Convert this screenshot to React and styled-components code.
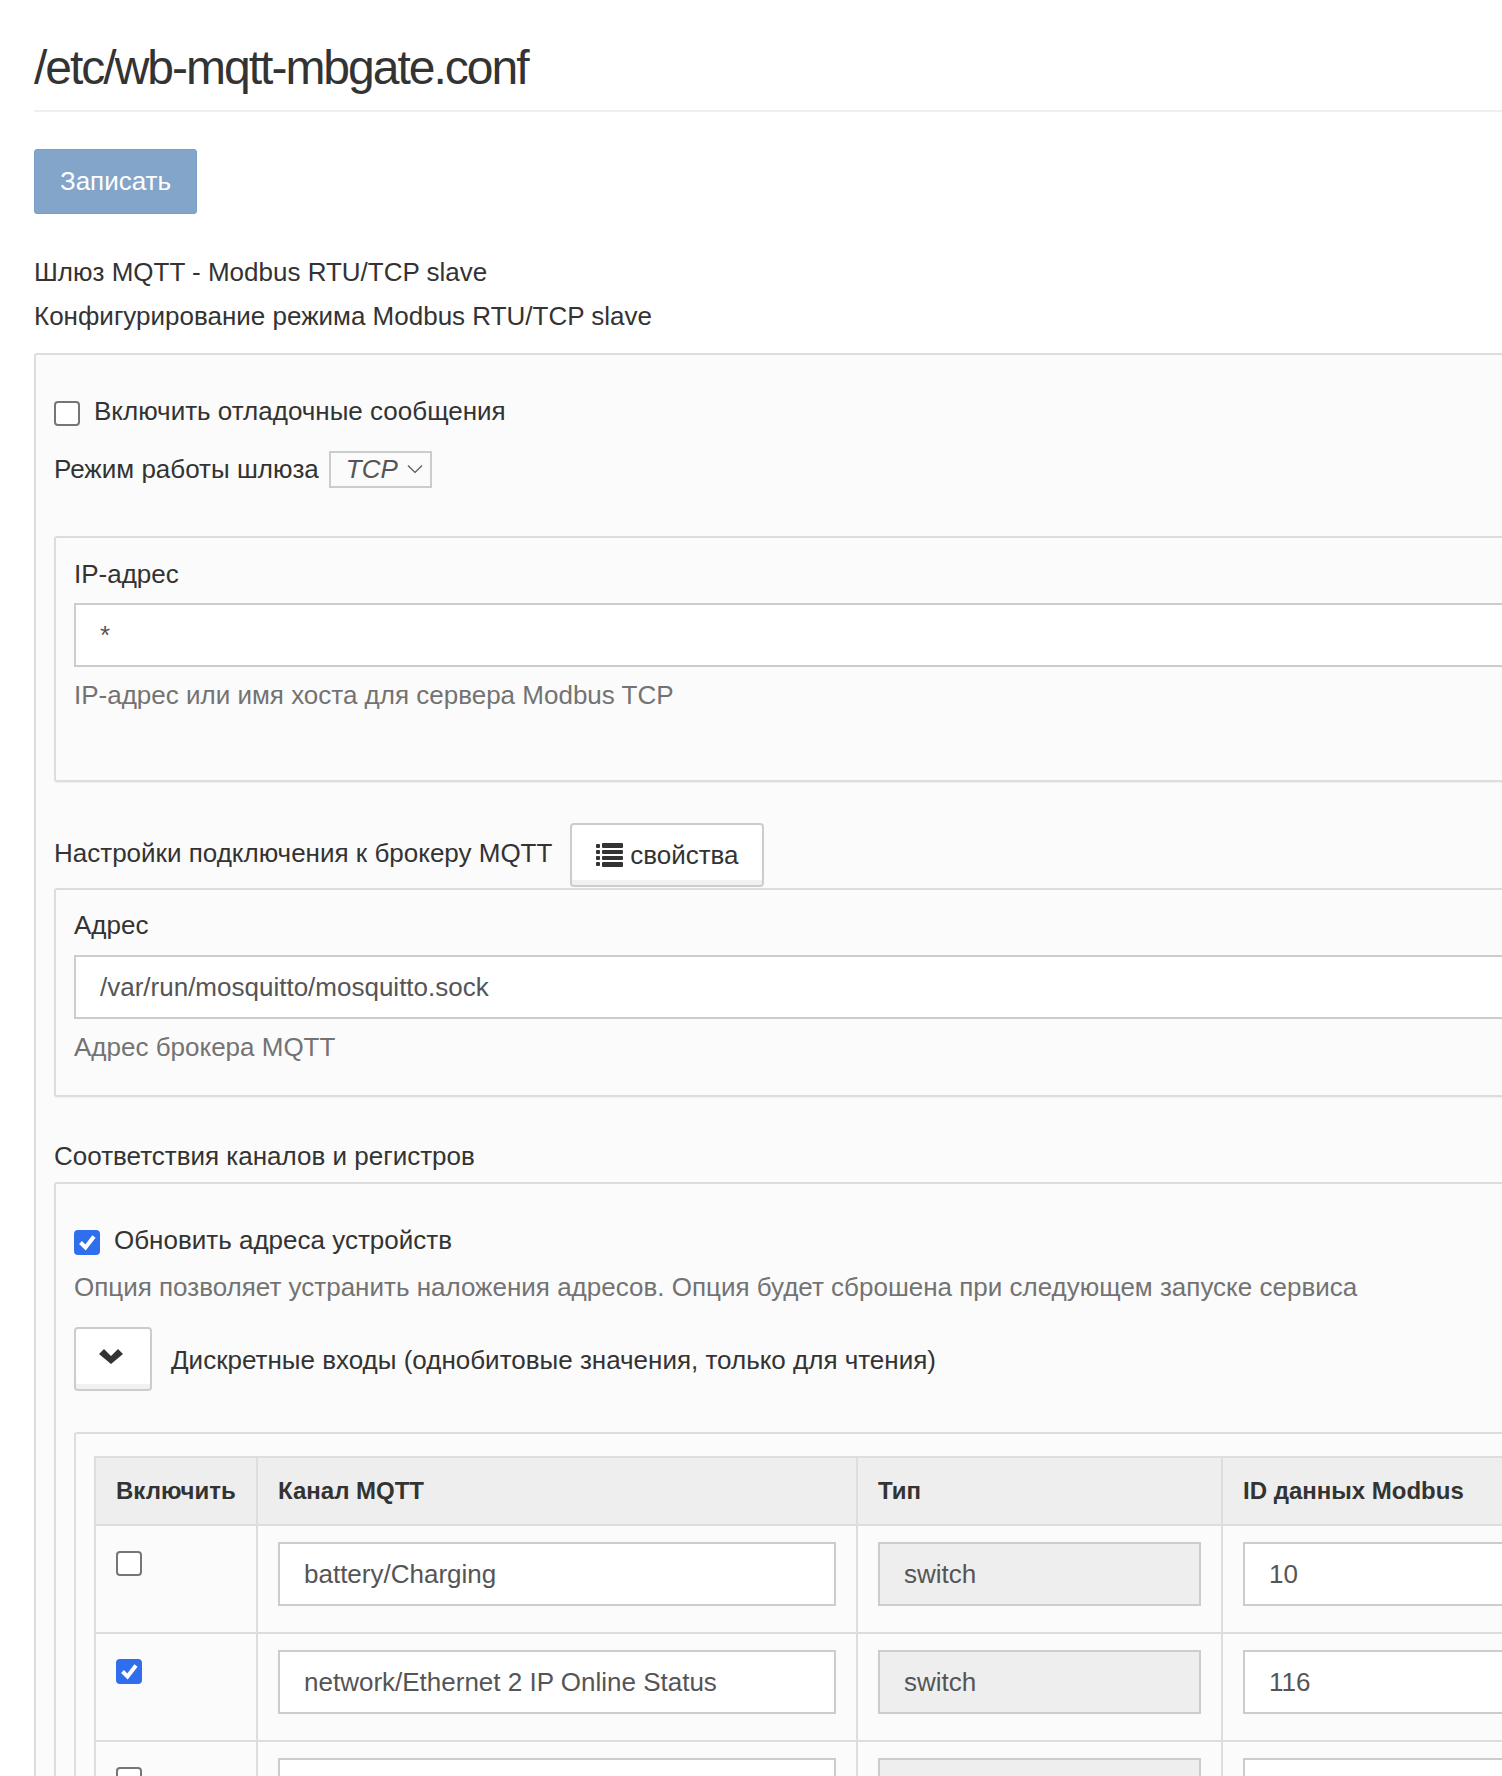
import React from 'react';
import styled, { createGlobalStyle } from 'styled-components';

const GlobalStyle = createGlobalStyle`
  html, body {
    margin: 0;
    padding: 0;
    background: #fff;
  }
`;

const Page = styled.div`
  width: 1502px;
  height: 1776px;
  overflow: hidden;
  box-sizing: border-box;
  padding-left: 34px;
  font-family: "Liberation Sans", Arial, sans-serif;
  font-size: 26px;
  color: #333;
`;

const Content = styled.div`
  width: 1660px;
`;

const Title = styled.h1`
  margin: 0;
  height: 110px;
  border-bottom: 2px solid #eee;
  font-size: 48px;
  font-weight: 400;
  line-height: 136px;
  letter-spacing: -2px;
`;

const SaveButton = styled.button`
  display: block;
  width: 163px;
  height: 65px;
  margin: 37px 0 0;
  padding: 0;
  border: 1px solid #7b9fc6;
  border-radius: 3px;
  background: #83a5c9;
  color: #fff;
  font: inherit;
`;

const Intro = styled.p`
  margin: ${(p) => p.$top}px 0 0;
  line-height: 44px;
`;

const Panel = styled.div`
  box-sizing: border-box;
  margin-top: ${(p) => p.$top || 0}px;
  padding: ${(p) => p.$pad || '0 18px'};
  min-height: ${(p) => p.$height}px;
  border: 2px solid #ddd;
  border-radius: 3px;
  background: #fbfbfb;
  box-shadow: 0 1px 1px rgba(0, 0, 0, 0.05);
`;

const CheckRow = styled.div`
  display: flex;
  align-items: center;
  gap: 14px;
  height: 44px;
`;

const Box = styled.span`
  display: inline-flex;
  flex: none;
  align-items: center;
  justify-content: center;
  box-sizing: border-box;
  width: 26px;
  height: 25px;
  position: relative;
  top: 2px;
  vertical-align: top;
  border: ${(p) => (p.$checked ? 'none' : '2px solid #767676')};
  border-radius: 4px;
  background: ${(p) => (p.$checked ? '#2f6fed' : '#fff')};
`;

const ModeRow = styled.div`
  display: flex;
  align-items: center;
  gap: 10px;
  height: 40px;
  margin-top: 16px;
`;

const ModeSelect = styled.div`
  display: flex;
  align-items: center;
  justify-content: space-between;
  box-sizing: border-box;
  width: 103px;
  height: 37px;
  padding: 0 7px 0 15px;
  border: 2px solid #ccc;
  font-style: italic;
  color: #555;
`;

const FieldLabel = styled.div`
  line-height: 44px;
  padding-top: ${(p) => p.$top || 0}px;
`;

const TextInput = styled.input`
  display: block;
  box-sizing: border-box;
  width: 100%;
  height: 64px;
  margin: ${(p) => p.$top || 0}px 0 0;
  padding: 0 24px;
  border: 2px solid #ccc;
  border-radius: 0;
  outline: none;
  background: ${(p) => (p.disabled ? '#eee' : '#fff')};
  color: #555;
  font: inherit;
  opacity: 1;
`;

const Hint = styled.div`
  margin-top: ${(p) => p.$top || 0}px;
  line-height: 44px;
  color: #737373;
`;

const HeadingRow = styled.div`
  display: flex;
  align-items: center;
  gap: 18px;
  height: 64px;
  margin-top: ${(p) => p.$top || 0}px;
`;

const HeadingLabel = styled.span`
  margin-bottom: 4px;
`;

const GhostButton = styled.button`
  display: inline-flex;
  flex: none;
  align-items: center;
  justify-content: center;
  gap: 7px;
  box-sizing: border-box;
  width: ${(p) => p.$w}px;
  height: ${(p) => p.$h}px;
  padding: ${(p) => p.$pad || 0};
  border: 2px solid #ccc;
  border-radius: 4px;
  background: #fff;
  box-shadow: inset 0 -5px 0 #f1f1f1;
  color: #333;
  font: inherit;
`;

const Section = styled.div`
  margin-top: ${(p) => p.$top}px;
  line-height: 44px;
`;

const ToggleRow = styled.div`
  display: flex;
  align-items: center;
  gap: 19px;
  margin-top: 18px;
`;

const ToggleLabel = styled.span`
  margin-top: 2px;
`;

const TablePanel = styled.div`
  box-sizing: border-box;
  margin-top: 41px;
  padding: 22px 18px 0;
  border: 2px solid #ddd;
  border-radius: 3px;
  background: #fbfbfb;
`;

const Table = styled.table`
  width: 1530px;
  table-layout: fixed;
  border-collapse: collapse;
`;

const Head = styled.th`
  height: 66px;
  padding: 0 20px;
  border: 2px solid #ddd;
  background: #eee;
  text-align: left;
  font-weight: 700;
  font-size: 24px;
`;

const Cell = styled.td`
  box-sizing: border-box;
  padding: ${(p) => (p.$check ? '23px' : '16px')} 20px 26px;
  border: 2px solid #ddd;
  vertical-align: top;
`;

const ListIcon = () => (
  <svg width="27" height="24" viewBox="0 0 27 24" fill="#333">
    <rect x="0" y="1" width="4" height="4" rx="1" />
    <rect x="0" y="7" width="4" height="4" rx="1" />
    <rect x="0" y="13" width="4" height="4" rx="1" />
    <rect x="0" y="19" width="4" height="4" rx="1" />
    <rect x="6" y="0" width="21" height="5" rx="1" />
    <rect x="6" y="7" width="21" height="4" rx="1" />
    <rect x="6" y="13" width="21" height="4" rx="1" />
    <rect x="6" y="19" width="21" height="5" rx="1" />
  </svg>
);

const ChevronIcon = () => (
  <svg width="24" height="16" viewBox="0 0 24 16" fill="#333">
    <path d="M0 6 L5 1 L12 8 L19 1 L24 6 L12 16 Z" />
  </svg>
);

const SmallChevron = () => (
  <svg width="16" height="10" viewBox="0 0 16 10" fill="none" stroke="#555" strokeWidth="1.2">
    <path d="M1 1.5 L8 8.5 L15 1.5" />
  </svg>
);

const CheckMark = () => (
  <svg width="26" height="25" viewBox="0 0 26 25" fill="none" stroke="#fff" strokeWidth="4">
    <path d="M6.5 12.5 L11.5 17.5 L20 6.5" />
  </svg>
);

const Checkbox = ({ checked }) => (
  <Box $checked={checked}>{checked && <CheckMark />}</Box>
);

const rows = [
  { channel: 'battery/Charging', id: '10', on: false },
  { channel: 'network/Ethernet 2 IP Online Status', id: '116', on: true },
  { channel: '', id: '', on: false },
];

const App = () => (
  <Page>
    <GlobalStyle />
    <Content>
      <Title>/etc/wb-mqtt-mbgate.conf</Title>
      <SaveButton>Записать</SaveButton>
      <Intro $top={36}>Шлюз MQTT - Modbus RTU/TCP slave</Intro>
      <Intro $top={0}>Конфигурирование режима Modbus RTU/TCP slave</Intro>

      <Panel $top={15} $pad="34px 18px 0">
        <CheckRow>
          <Checkbox />
          <span>Включить отладочные сообщения</span>
        </CheckRow>
        <ModeRow>
          <span>Режим работы шлюза</span>
          <ModeSelect>TCP <SmallChevron /></ModeSelect>
        </ModeRow>

        <Panel $top={47} $height={246}>
          <FieldLabel $top={14}>IP-адрес</FieldLabel>
          <TextInput $top={7} value="*" readOnly />
          <Hint $top={6}>IP-адрес или имя хоста для сервера Modbus TCP</Hint>
        </Panel>

        <HeadingRow $top={41}>
          <HeadingLabel>Настройки подключения к брокеру MQTT</HeadingLabel>
          <GhostButton $w={194} $h={64}><ListIcon /> свойства</GhostButton>
        </HeadingRow>
        <Panel $top={1} $height={209}>
          <FieldLabel $top={13}>Адрес</FieldLabel>
          <TextInput $top={8} value="/var/run/mosquitto/mosquitto.sock" readOnly />
          <Hint $top={6}>Адрес брокера MQTT</Hint>
        </Panel>

        <Section $top={37}>Соответствия каналов и регистров</Section>
        <Panel $top={4} $pad="34px 18px 40px">
          <CheckRow>
            <Checkbox checked />
            <span>Обновить адреса устройств</span>
          </CheckRow>
          <Hint $top={3}>Опция позволяет устранить наложения адресов. Опция будет сброшена при следующем запуске сервиса</Hint>
          <ToggleRow>
            <GhostButton $w={78} $h={64} $pad="0 4px 7px 0"><ChevronIcon /></GhostButton>
            <ToggleLabel>Дискретные входы (однобитовые значения, только для чтения)</ToggleLabel>
          </ToggleRow>
          <TablePanel>
            <Table>
              <colgroup>
                <col width="162" />
                <col width="600" />
                <col width="365" />
                <col width="403" />
              </colgroup>
              <thead>
                <tr>
                  <Head>Включить</Head>
                  <Head>Канал MQTT</Head>
                  <Head>Тип</Head>
                  <Head>ID данных Modbus</Head>
                </tr>
              </thead>
              <tbody>
                {rows.map((row, i) => (
                  <tr key={i}>
                    <Cell $check><Checkbox checked={row.on} /></Cell>
                    <Cell><TextInput value={row.channel} readOnly /></Cell>
                    <Cell><TextInput value="switch" disabled /></Cell>
                    <Cell><TextInput value={row.id} readOnly /></Cell>
                  </tr>
                ))}
              </tbody>
            </Table>
          </TablePanel>
        </Panel>
      </Panel>
    </Content>
  </Page>
);

export default App;
